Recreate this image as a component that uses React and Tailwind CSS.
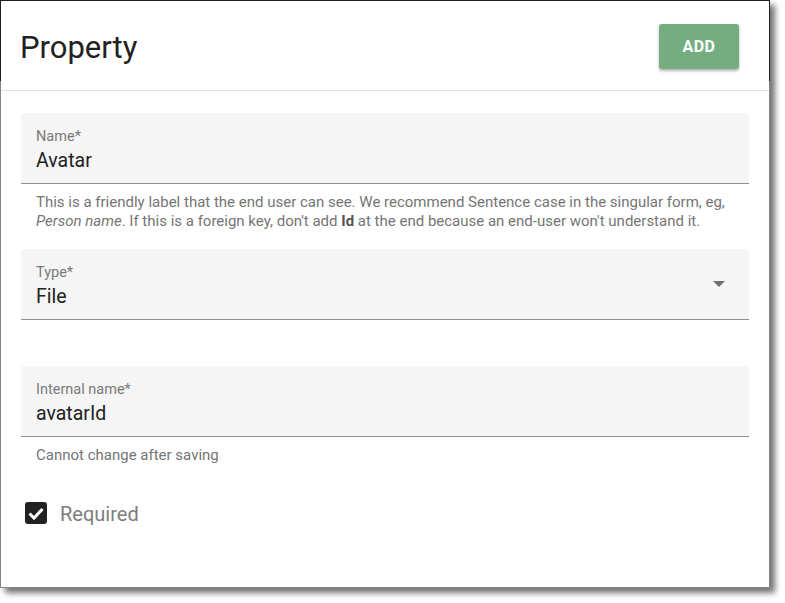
import React from 'react';

function Field({ label, value, select }) {
    return (
        <div className="flex items-center h-[71px] bg-[#f5f5f5] border-b border-[#8f8f8f] rounded-t-[4px]">
            <div className="flex-1 flex flex-col self-stretch pt-[16px] pl-[15px]">
                <span className="text-[14.5px] leading-[16px] text-[#7a7a7a]">{label}</span>
                <span className="mt-[4px] text-[19.5px] leading-[24px] text-[#212121]">{value}</span>
            </div>
            {select && (
                <svg width="12" height="6" viewBox="0 0 12 6" className="mr-[24px]">
                    <path d="M0 0 L12 0 L6 6 Z" fill="#6f6f6f" />
                </svg>
            )}
        </div>
    );
}

export default function App() {
    return (
        <div className="w-[785px] h-[603px] bg-white font-['Roboto',sans-serif]">
            <div className="relative w-[770px] h-[588px] bg-white border border-[#858585] shadow-[5px_5px_6px_rgba(0,0,0,0.55)]">
                {/* dark edge of the captured window */}
                <div className="absolute -top-px -left-px -right-px h-[81px] border-t border-x border-[#1e1e1e] pointer-events-none" />

                <div className="flex items-center justify-between h-[90px] pl-[19px] pr-[30px] border-b border-[#e0e0e0]">
                    <h1 className="pt-[4px] text-[31px] leading-none text-[#212121]">Property</h1>
                    <button
                        type="button"
                        className="mt-[2px] w-[80px] h-[45px] rounded-[3px] bg-[#74ae80] text-white text-[16px] font-bold tracking-[0.5px] shadow-[0_2px_3px_rgba(0,0,0,0.3)]"
                    >
                        ADD
                    </button>
                </div>

                <div className="px-[20px] pt-[22px]">
                    <Field label="Name*" value="Avatar" />
                    <p className="mt-[9px] px-[15px] text-[15px] leading-[19px] text-[#757575]">
                        This is a friendly label that the end user can see. We recommend Sentence case in the singular form, eg,{' '}
                        <em>Person name</em>. If this is a foreign key, don't add <strong className="font-bold text-[#555]">Id</strong> at the end because an end-user won't understand it.
                    </p>

                    <div className="mt-[18px]">
                        <Field label="Type*" value="File" select />
                    </div>

                    <div className="mt-[46px]">
                        <Field label="Internal name*" value="avatarId" />
                    </div>
                    <p className="mt-[9px] px-[15px] text-[15px] leading-[19px] text-[#757575]">
                        Cannot change after saving
                    </p>

                    <label className="mt-[36px] ml-[4px] flex items-center gap-[13px] h-[24px]">
                        <svg width="22" height="22" viewBox="0 0 22 22">
                            <rect x="0" y="0" width="22" height="22" rx="3" fill="#212121" />
                            <path d="M4.5 11.5 L9 16 L17.5 7" fill="none" stroke="#fff" strokeWidth="3" />
                        </svg>
                        <span className="pt-[2px] text-[20px] leading-[24px] text-[#7d7d7d]">Required</span>
                    </label>
                </div>
            </div>
        </div>
    );
}
